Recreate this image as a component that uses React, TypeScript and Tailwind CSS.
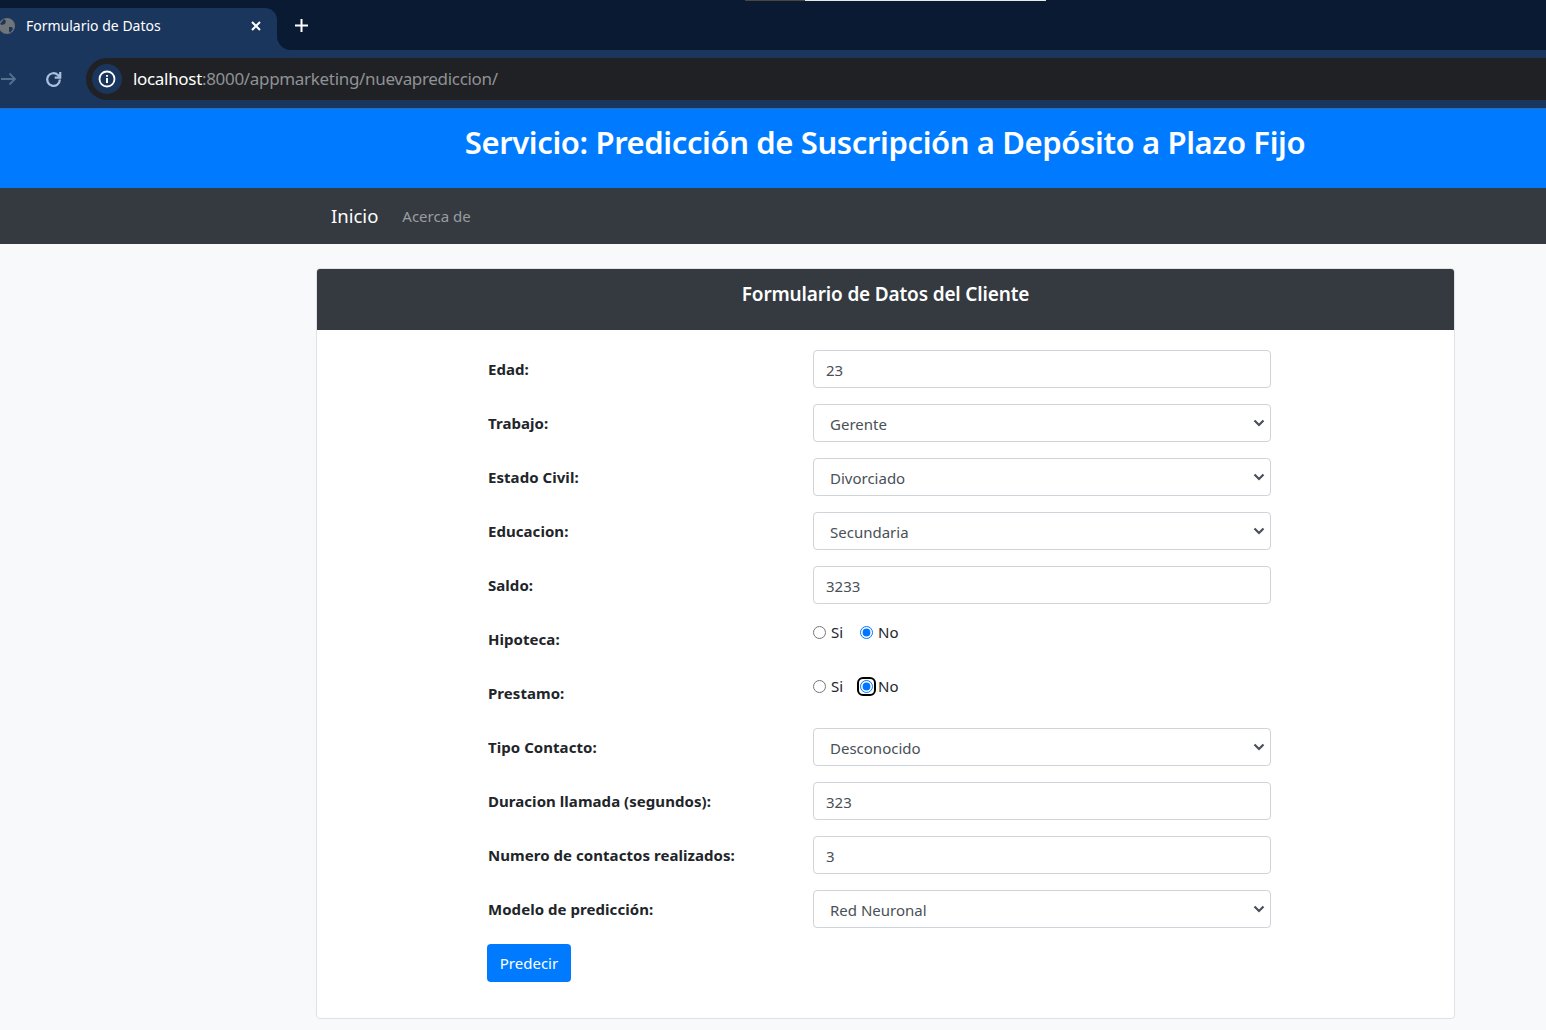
const fieldBase = 'h-[38px] w-full rounded border border-[#ced4da] bg-white text-[15px] text-[#495057] outline-none'
const labelClass = 'w-[326px] shrink-0 pl-px text-[15px] leading-[38px] font-bold tracking-[0.05px] text-[#212529]'

function TextRow({ label, value }: { label: string; value: string }) {
  return (
    <div className="mb-4 flex h-[38px]">
      <label className={labelClass}>{label}</label>
      <input type="text" defaultValue={value} className={`${fieldBase} px-3 pt-px`} />
    </div>
  )
}

function SelectRow({ label, value }: { label: string; value: string }) {
  return (
    <div className="mb-4 flex h-[38px]">
      <label className={labelClass}>{label}</label>
      <div className="relative w-full">
        <select defaultValue={value} className={`${fieldBase} appearance-none pt-[2px] pr-3 pl-4`}>
          <option value={value}>{value}</option>
        </select>
        <svg
          width="12"
          height="8"
          viewBox="0 0 12 8"
          fill="none"
          stroke="#495057"
          strokeWidth="2.200"
          className="pointer-events-none absolute top-[15px] right-[6px]"
        >
          <path d="M1.500 1.500L6 6l4.500-4.500" />
        </svg>
      </div>
    </div>
  )
}

function RadioRow({ label, name, focused }: { label: string; name: string; focused?: boolean }) {
  return (
    <div className="mb-4 flex h-[38px]">
      <label className={labelClass}>{label}</label>
      <div className="flex h-6 items-center text-[15px] text-[#212529]">
        <input type="radio" name={name} className="m-0 size-[13px]" />
        <span className="ml-[5px] w-[29px]">Si</span>
        <span className="relative flex size-[13px]">
          <input type="radio" name={name} defaultChecked className="m-0 size-[13px]" />
          {focused && <span className="absolute -inset-[3px] rounded-[6px] border-2 border-black" />}
        </span>
        <span className="ml-[5px]">No</span>
      </div>
    </div>
  )
}

function BrowserBar() {
  return (
    <div className="relative bg-[#1b365d]">
      <div className="absolute top-0 left-[745px] flex h-px">
        <div className="w-[60px] bg-[#4a4640]" />
        <div className="w-[241px] bg-[#e8e8e8]" />
      </div>
      <div className="flex h-[50px]">
        <div className="w-[277px] bg-[#0a1a33] pt-2">
          <div className="flex h-[42px] items-center rounded-tr-xl bg-[#1b365d] pr-[15px] pb-[7px] text-white">
            <svg width="20" height="20" viewBox="0 0 20 20" className="-ml-[3px] shrink-0">
              <circle cx="10" cy="10" r="8" fill="#71757a" />
              <path d="M7 3l2 2-1 3-3 1-2-1M12 11l3 0 1 2-3 4-1-2z" fill="#1b365d" />
            </svg>
            <span className="ml-[9px] flex-1 text-sm leading-5">Formulario de Datos</span>
            <svg width="12" height="12" viewBox="0 0 12 12" stroke="white" strokeWidth="2">
              <path d="M2 2l8 8M10 2l-8 8" />
            </svg>
          </div>
        </div>
        <div className="flex flex-1 rounded-bl-[14px] bg-[#0a1a33] pl-[18px]">
          <svg width="13" height="13" viewBox="0 0 13 13" stroke="white" strokeWidth="2" className="mt-[19px]">
            <path d="M6.500 0v13M0 6.500h13" />
          </svg>
        </div>
      </div>
      <div className="flex h-[58px] items-start pt-2">
        <div className="flex h-[42px] w-[86px] items-center">
          <svg width="16" height="14" viewBox="0 0 16 14" fill="none" stroke="#56708f" strokeWidth="1.800" className="ml-px">
            <path d="M0 7h14M8.500 1.500L14 7l-5.500 5.500" />
          </svg>
          <svg width="19" height="19" viewBox="0 0 24 24" fill="none" stroke="#a9bfda" strokeWidth="2.800" className="ml-[27px]">
            <path d="M20 12a8 8 0 1 1-2.400-5.700L20 8.700" />
            <path d="M20.500 2.500v7h-7" />
          </svg>
        </div>
        <div className="flex h-[42px] flex-1 items-center rounded-l-[21px] bg-[#202124] pl-[6px]">
          <div className="flex size-[30px] items-center justify-center rounded-full bg-[#1b365d]">
            <svg width="18" height="18" viewBox="0 0 18 18" fill="none" stroke="white">
              <circle cx="9" cy="9" r="7.500" strokeWidth="1.800" />
              <path d="M9 8v5M9 5v1.800" strokeWidth="2" />
            </svg>
          </div>
          <span className="ml-[11px] text-[17px] leading-6 tracking-[-0.32px] text-white">
            localhost<span className="text-[#8f9296]">:8000/appmarketing/nuevaprediccion/</span>
          </span>
        </div>
      </div>
    </div>
  )
}

export default function App() {
  return (
    <div className="h-[1030px] overflow-hidden bg-[#f8f9fa] font-['Noto_Sans',sans-serif]">
      <BrowserBar />
      <header className="h-[80px] border-t border-[#2a6cb8] bg-[#007bff] pt-[14px] pl-[224px] text-center text-[31px] leading-[38px] font-semibold tracking-[-0.38px] text-white">
        Servicio: Predicción de Suscripción a Depósito a Plazo Fijo
      </header>
      <nav className="flex h-[56px] items-center bg-[#343a40] pl-[331px]">
        <a className="text-[18.500px] text-white">Inicio</a>
        <a className="ml-6 text-[15px] text-[#9a9da0]">Acerca de</a>
      </nav>
      <main className="mt-6 ml-[316px] w-[1139px] rounded border border-[#dfe1e4] bg-white">
        <h2 className="h-[61px] rounded-t-[3px] bg-[#343a40] text-center text-[19px] leading-[50px] font-semibold tracking-[-0.16px] text-white">
          Formulario de Datos del Cliente
        </h2>
        <form className="pt-5 pb-9 pl-[170px]">
          <div className="w-[784px]">
            <TextRow label="Edad:" value="23" />
            <SelectRow label="Trabajo:" value="Gerente" />
            <SelectRow label="Estado Civil:" value="Divorciado" />
            <SelectRow label="Educacion:" value="Secundaria" />
            <TextRow label="Saldo:" value="3233" />
            <RadioRow label="Hipoteca:" name="hipoteca" />
            <RadioRow label="Prestamo:" name="prestamo" focused />
            <SelectRow label="Tipo Contacto:" value="Desconocido" />
            <TextRow label="Duracion llamada (segundos):" value="323" />
            <TextRow label="Numero de contactos realizados:" value="3" />
            <SelectRow label="Modelo de predicción:" value="Red Neuronal" />
          </div>
          <button type="button" className="h-[38px] w-[84px] rounded bg-[#007bff] text-[15px] text-white">
            Predecir
          </button>
        </form>
      </main>
    </div>
  )
}
